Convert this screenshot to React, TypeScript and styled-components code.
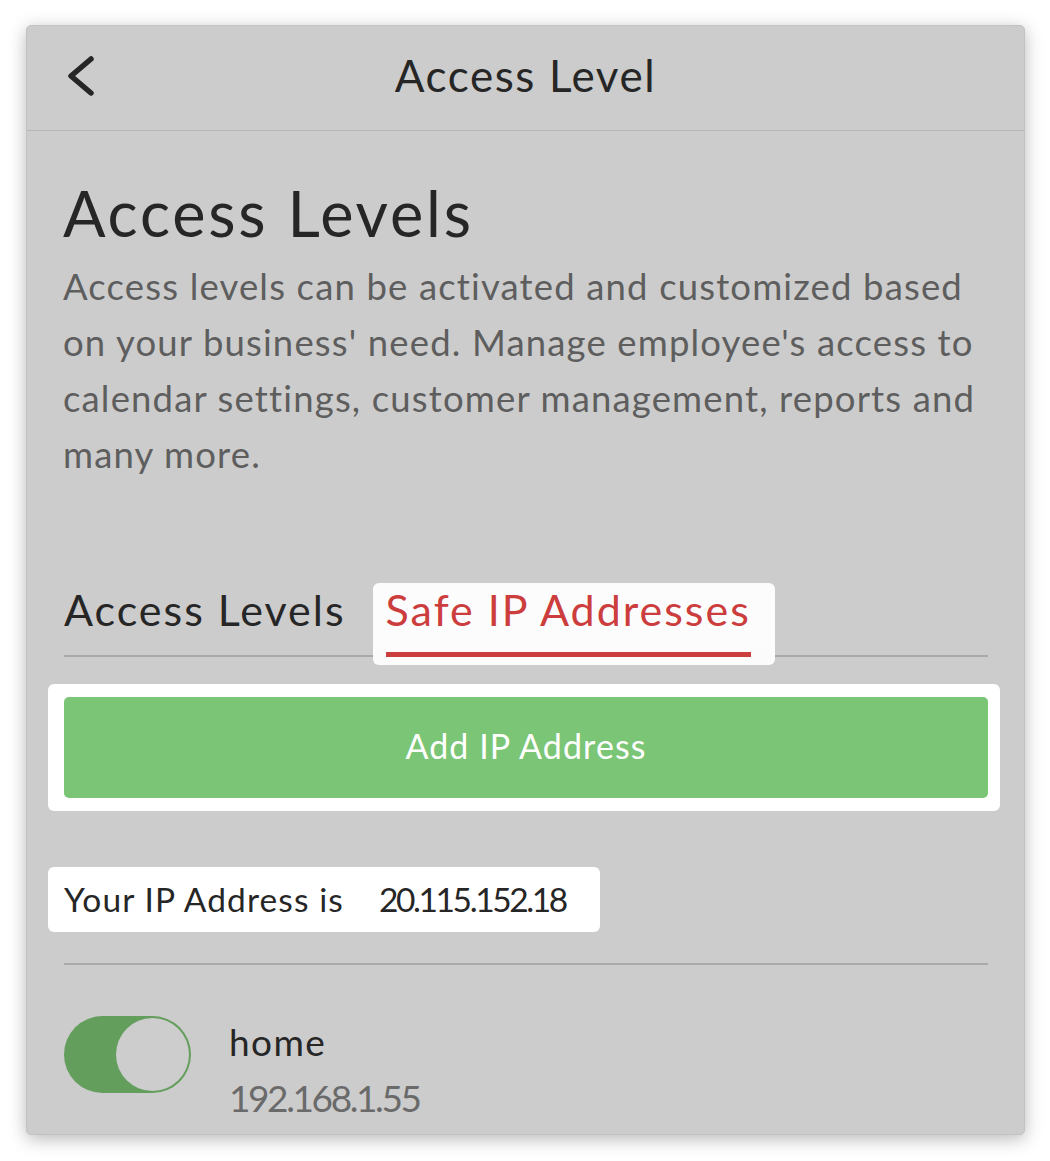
import React from "react";
import styled, { createGlobalStyle } from "styled-components";

const GlobalStyle = createGlobalStyle`
  html, body {
    margin: 0;
    padding: 0;
    background: #ffffff;
  }
  body {
    font-family: Lato, "Liberation Sans", sans-serif;
    color: #262626;
  }
`;

const Page = styled.div`
  padding: 25px 25px 26px 26px;
  box-sizing: border-box;
  width: 1050px;
  height: 1161px;
`;

const Card = styled.div`
  width: 999px;
  height: 1110px;
  background: #cccccc;
  border: 1px solid #c2c2c2;
  border-radius: 5px;
  box-sizing: border-box;
  box-shadow: 0 4px 18px rgba(0, 0, 0, 0.28);
  overflow: hidden;
`;

const Header = styled.header`
  height: 105px;
  border-bottom: 1px solid #b6b6b6;
  box-sizing: border-box;
  display: grid;
  grid-template-columns: 100px 1fr 100px;
  align-items: center;
`;

const BackButton = styled.button`
  background: none;
  border: 0;
  padding: 0 0 4px 40px;
  display: flex;
  align-items: center;
  cursor: pointer;
`;

const Title = styled.h1`
  margin: 0;
  text-align: center;
  font-size: 44px;
  font-weight: 400;
  letter-spacing: 1.6px;
  color: #262626;
  padding-bottom: 6px;
`;

const Body = styled.main`
  padding: 0 36px 0 37px;
`;

const Heading = styled.h2`
  margin: 44px 0 0 -1px;
  font-size: 63px;
  font-weight: 400;
  letter-spacing: 2.8px;
  line-height: 1.2;
  color: #262626;
`;

const Intro = styled.p`
  margin: 7px 0 0 -1px;
  font-size: 36.5px;
  letter-spacing: 1.15px;
  line-height: 56px;
  color: #5e5e5e;
`;

const TabBar = styled.nav`
  margin-top: 103px;
  display: flex;
  gap: 40px;
  border-bottom: 2px solid #a9a9a9;
  isolation: isolate;
`;

const Tab = styled.div<{ $active?: boolean }>`
  position: relative;
  font-size: 43px;
  letter-spacing: 2px;
  line-height: 50px;
  padding-bottom: 17px;
  border-bottom: 5px solid ${(p) => (p.$active ? "#cc3d3d" : "transparent")};
  margin-bottom: -2px;
  color: ${(p) => (p.$active ? "#cc3d3d" : "#262626")};

  ${(p) =>
    p.$active &&
    `
    &::before {
      content: "";
      position: absolute;
      left: -13px;
      right: -24px;
      top: -2px;
      bottom: -13px;
      background: rgba(255, 255, 255, 0.94);
      border-radius: 6px;
      z-index: -1;
    }
  `}
`;

const Highlight = styled.div`
  background: #ffffff;
  border-radius: 6px;
`;

const ButtonFrame = styled(Highlight)`
  margin: 27px -12px 0 -16px;
  padding: 13px 12px 13px 16px;
`;

const AddButton = styled.button`
  display: block;
  width: 100%;
  height: 101px;
  border: 0;
  border-radius: 5px;
  background: #7bc576;
  color: #ffffff;
  font-family: Lato, "Liberation Sans", sans-serif;
  font-size: 34px;
  letter-spacing: 1.1px;
  padding-bottom: 4px;
  cursor: pointer;
`;

const IpRow = styled(Highlight)`
  margin: 56px 0 0 -16px;
  width: fit-content;
  height: 65px;
  padding: 0 34px 0 16px;
  display: flex;
  align-items: center;
  gap: 35px;
  font-size: 33.5px;
  color: #262626;
`;

const IpLabel = styled.span`
  letter-spacing: 1.1px;
`;

const IpValue = styled.span`
  letter-spacing: -2.4px;
`;

const Divider = styled.hr`
  margin: 31px 0 0;
  border: 0;
  border-top: 2px solid #a9a9a9;
`;

const IpItem = styled.div`
  display: flex;
  align-items: flex-start;
  gap: 39px;
  margin-top: 49px;
`;

const Switch = styled.div<{ $on: boolean }>`
  margin-top: 2px;
  width: 127px;
  height: 77px;
  border-radius: 39px;
  background: ${(p) => (p.$on ? "#639e5d" : "#bbbbbb")};
  box-sizing: border-box;
  padding: 2px;
  display: flex;
  justify-content: ${(p) => (p.$on ? "flex-end" : "flex-start")};
  flex-shrink: 0;
`;

const Knob = styled.span`
  width: 73px;
  height: 73px;
  border-radius: 50%;
  background: #cdcdcd;
`;

const ItemText = styled.div`
  display: flex;
  flex-direction: column;
  margin-left: -1px;
`;

const ItemName = styled.div`
  font-size: 37px;
  letter-spacing: 1.4px;
  line-height: 56px;
  color: #262626;
`;

const ItemIp = styled.div`
  font-size: 37px;
  letter-spacing: -2.4px;
  line-height: 56px;
  color: #6a6a6a;
`;

const ips = [{ name: "home", ip: "192.168.1.55", on: true }];

export default function App() {
  return (
    <>
      <GlobalStyle />
      <Page>
        <Card>
          <Header>
            <BackButton aria-label="Back">
              <svg width="30" height="44" viewBox="0 0 30 44">
                <polyline
                  points="24,5 4,22 24,39"
                  fill="none"
                  stroke="#262626"
                  strokeWidth="5.5"
                  strokeLinecap="round"
                  strokeLinejoin="round"
                />
              </svg>
            </BackButton>
            <Title>Access Level</Title>
            <div />
          </Header>
          <Body>
            <Heading>Access Levels</Heading>
            <Intro>
              Access levels can be activated and customized based on your business' need. Manage
              employee's access to calendar settings, customer management, reports and many more.
            </Intro>

            <TabBar>
              <Tab>Access Levels</Tab>
              <Tab $active>Safe IP Addresses</Tab>
            </TabBar>

            <ButtonFrame>
              <AddButton>Add IP Address</AddButton>
            </ButtonFrame>

            <IpRow>
              <IpLabel>Your IP Address is</IpLabel>
              <IpValue>20.115.152.18</IpValue>
            </IpRow>

            <Divider />

            {ips.map((item) => (
              <IpItem key={item.ip}>
                <Switch $on={item.on}>
                  <Knob />
                </Switch>
                <ItemText>
                  <ItemName>{item.name}</ItemName>
                  <ItemIp>{item.ip}</ItemIp>
                </ItemText>
              </IpItem>
            ))}
          </Body>
        </Card>
      </Page>
    </>
  );
}
